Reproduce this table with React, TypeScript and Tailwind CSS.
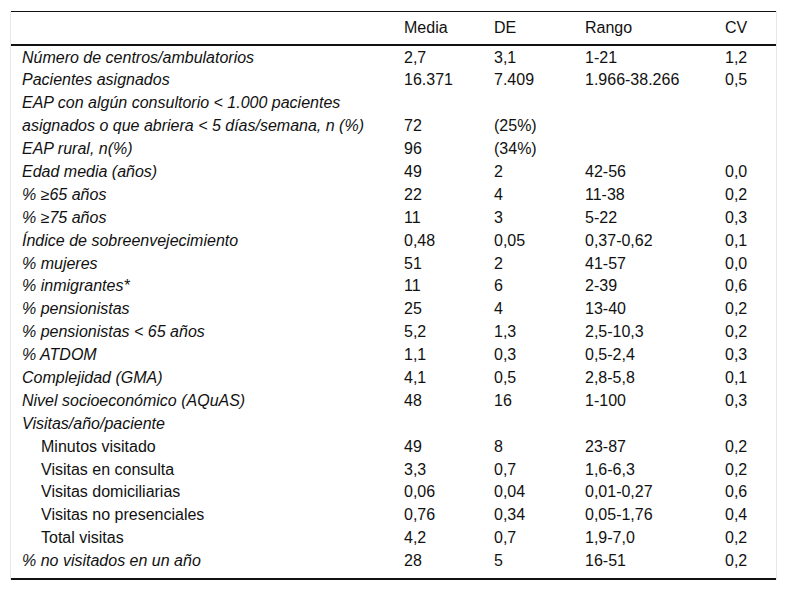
const rows: { label: string; italic?: boolean; indent?: boolean; media?: string; de?: string; rango?: string; cv?: string }[] = [
  { label: 'Número de centros/ambulatorios', italic: true, media: '2,7', de: '3,1', rango: '1-21', cv: '1,2' },
  { label: 'Pacientes asignados', italic: true, media: '16.371', de: '7.409', rango: '1.966-38.266', cv: '0,5' },
  { label: 'EAP con algún consultorio < 1.000 pacientes', italic: true },
  { label: 'asignados o que abriera < 5 días/semana, n (%)', italic: true, media: '72', de: '(25%)' },
  { label: 'EAP rural, n(%)', italic: true, media: '96', de: '(34%)' },
  { label: 'Edad media (años)', italic: true, media: '49', de: '2', rango: '42-56', cv: '0,0' },
  { label: '% ≥65 años', italic: true, media: '22', de: '4', rango: '11-38', cv: '0,2' },
  { label: '% ≥75 años', italic: true, media: '11', de: '3', rango: '5-22', cv: '0,3' },
  { label: 'Índice de sobreenvejecimiento', italic: true, media: '0,48', de: '0,05', rango: '0,37-0,62', cv: '0,1' },
  { label: '% mujeres', italic: true, media: '51', de: '2', rango: '41-57', cv: '0,0' },
  { label: '% inmigrantes*', italic: true, media: '11', de: '6', rango: '2-39', cv: '0,6' },
  { label: '% pensionistas', italic: true, media: '25', de: '4', rango: '13-40', cv: '0,2' },
  { label: '% pensionistas < 65 años', italic: true, media: '5,2', de: '1,3', rango: '2,5-10,3', cv: '0,2' },
  { label: '% ATDOM', italic: true, media: '1,1', de: '0,3', rango: '0,5-2,4', cv: '0,3' },
  { label: 'Complejidad (GMA)', italic: true, media: '4,1', de: '0,5', rango: '2,8-5,8', cv: '0,1' },
  { label: 'Nivel socioeconómico (AQuAS)', italic: true, media: '48', de: '16', rango: '1-100', cv: '0,3' },
  { label: 'Visitas/año/paciente', italic: true },
  { label: 'Minutos visitado', indent: true, media: '49', de: '8', rango: '23-87', cv: '0,2' },
  { label: 'Visitas en consulta', indent: true, media: '3,3', de: '0,7', rango: '1,6-6,3', cv: '0,2' },
  { label: 'Visitas domiciliarias', indent: true, media: '0,06', de: '0,04', rango: '0,01-0,27', cv: '0,6' },
  { label: 'Visitas no presenciales', indent: true, media: '0,76', de: '0,34', rango: '0,05-1,76', cv: '0,4' },
  { label: 'Total visitas', indent: true, media: '4,2', de: '0,7', rango: '1,9-7,0', cv: '0,2' },
  { label: '% no visitados en un año', italic: true, media: '28', de: '5', rango: '16-51', cv: '0,2' },
]

export default function App() {
  return (
    <div className="min-h-[591px] bg-white pt-[11px] px-[10px] font-['Liberation_Sans',Arial,sans-serif] text-[16px] text-[#111]">
      <div className="w-[767px] border-x border-[#e8e8e8]">
        <table className="w-full border-collapse table-fixed">
          <colgroup>
            <col className="w-[381px]" />
            <col className="w-[90px]" />
            <col className="w-[91px]" />
            <col className="w-[140px]" />
            <col />
          </colgroup>
          <thead>
            <tr className="h-[33px] border-t border-b-2 border-[#111]">
              <th className="font-normal" />
              <th className="font-normal text-left pl-[12px]">Media</th>
              <th className="font-normal text-left pl-[12px]">DE</th>
              <th className="font-normal text-left pl-[12px]">Rango</th>
              <th className="font-normal text-left pl-[12px]">CV</th>
            </tr>
          </thead>
          <tbody className="border-b-2 border-[#111]">
            {rows.map((r, i) => {
              // first row gets a little air under the header rule, last row above the closing rule
              const pad = i === 0 ? 'pt-[2px]' : i === rows.length - 1 ? 'pb-[6px]' : ''
              return (
                <tr key={i} className={`leading-[18px] ${i === 0 ? 'h-[24.5px]' : i === rows.length - 1 ? 'h-[29px]' : 'h-[22.9px]'}`}>
                  <td className={`${r.indent ? 'pl-[30px]' : 'pl-[11px]'} ${r.italic ? 'italic' : ''} whitespace-nowrap ${pad}`}>
                    {r.label}
                  </td>
                  <td className={`pl-[12px] ${pad}`}>{r.media}</td>
                  <td className={`pl-[12px] ${pad}`}>{r.de}</td>
                  <td className={`pl-[12px] ${pad}`}>{r.rango}</td>
                  <td className={`pl-[12px] ${pad}`}>{r.cv}</td>
                </tr>
              )
            })}
          </tbody>
        </table>
      </div>
    </div>
  )
}
